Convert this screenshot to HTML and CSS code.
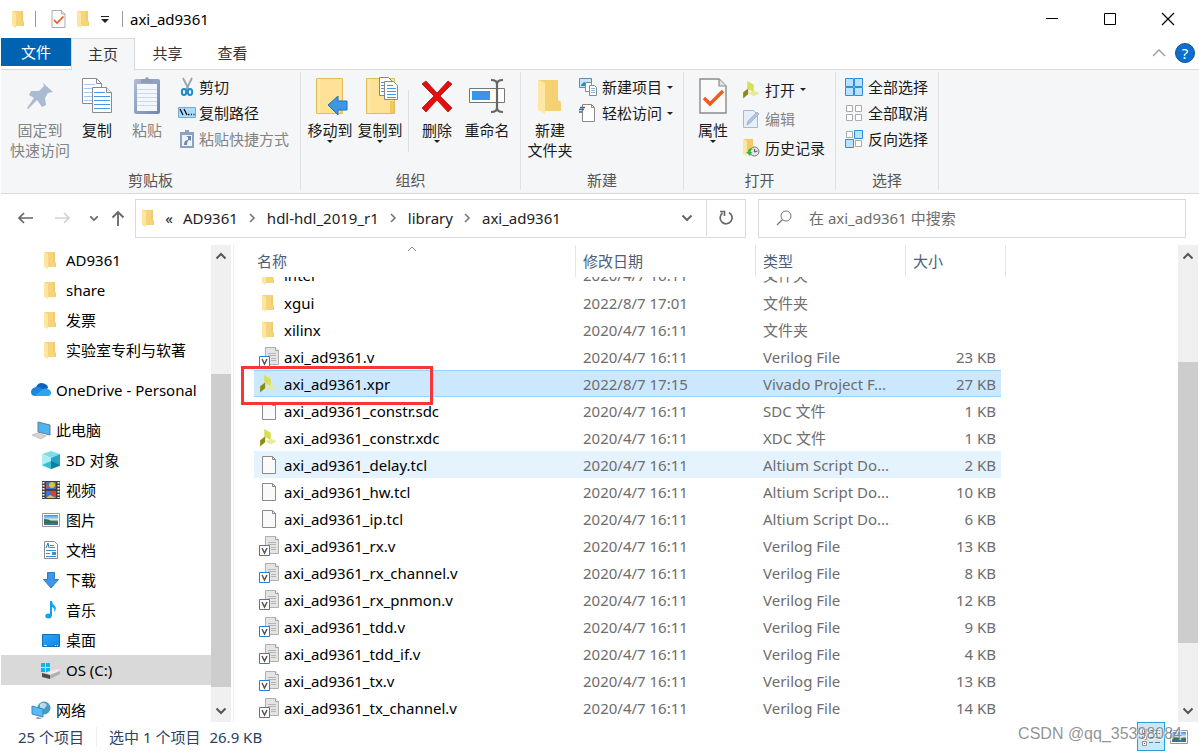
FILE: index.html
```html
<!DOCTYPE html>
<html lang="zh-CN">
<head>
<meta charset="utf-8">
<title>axi_ad9361</title>
<link rel="stylesheet" href="styles.css">
</head>
<body>
<svg class="defs" aria-hidden="true">
  <defs>
    <linearGradient id="clip" x1="0" x2="1" y1="0" y2="1"><stop offset="0" stop-color="#b0bcd2"/><stop offset="1" stop-color="#7185ad"/></linearGradient>
    <linearGradient id="blue" x1="0" x2="1" y1="0" y2="1"><stop offset="0" stop-color="#28a8ff"/><stop offset="1" stop-color="#1583e0"/></linearGradient>
    <linearGradient id="sky" x1="0" x2="0" y1="0" y2="1"><stop offset="0" stop-color="#3f8fe0"/><stop offset="0.5" stop-color="#dff1fb"/><stop offset="0.6" stop-color="#4c7a6c"/><stop offset="1" stop-color="#2f70a8"/></linearGradient>
  </defs>
  <symbol id="folder" viewBox="0 0 14 18">
    <path d="M2 1h10v10l1 1v4H2z" fill="#f3cb68"/><path d="M3 1h7v9l2 2v4H3z" fill="#f6d47b"/><path d="M1 1l4 2v15l-4-2z" fill="#ffe69e"/>
  </symbol>
  <symbol id="checkdoc" viewBox="0 0 28 36">
    <path d="M1 1h19l7 7v27H1z" fill="#fafafa" stroke="#8b8b8b" stroke-width="1.4"/><path d="M20 1v7h7" fill="#e2e2e2" stroke="#8b8b8b" stroke-width="1.2"/><path d="M5 20l6 6L24 13" fill="none" stroke="#f05a1a" stroke-width="3.4"/>
  </symbol>
  <symbol id="vivado" viewBox="0 0 18 19">
    <path d="M5 0l7 4v8l-7-4z" fill="#d8df55"/><path d="M.7 12L6 8v6L.7 18.500z" fill="#8c8c12"/><path d="M6 13l6-3 6 3-6 3z" fill="#e6eb9c"/>
  </symbol>
  <symbol id="page" viewBox="0 0 18 20">
    <path d="M2.500 1.500h10l3 3v14h-13z" fill="#fafafa" stroke="#8b8b8b"/><path d="M12.500 1.500v3h3" fill="none" stroke="#8b8b8b"/>
  </symbol>
  <symbol id="verilog" viewBox="0 0 20 20">
    <path d="M6.500.500h10l3 3V17.500h-13z" fill="#e4e4e4" stroke="#b0b0b0"/><path d="M16.500.500v3h3" fill="#fff" stroke="#a0a0a0"/><path d="M9 6.500h8M9 8.500h8M12 11.500h5M12 13.500h5" stroke="#b4b4b4"/><path d="M.5 9.500h10v10H.5z" fill="#fff" stroke="#2c7fd0"/><path d="M3 12l2.500 5L8 12" fill="none" stroke="#555" stroke-width="1.500"/>
  </symbol>
  <symbol id="picture" viewBox="0 0 18 14">
    <path d="M.5.500h17v13H.5z" fill="#fff" stroke="#9a9a9a"/><path d="M2 2h14v10H2z" fill="url(#sky)"/><path d="M2 6q5 0 7 2l7 1v1H2z" fill="#3c6b58"/>
  </symbol>
  <symbol id="chevup" viewBox="0 0 12 8"><path d="M1.500 6.500L6 2l4.500 4.500" fill="none" stroke="currentColor" stroke-width="2"/></symbol>
  <symbol id="chevdown" viewBox="0 0 12 8"><path d="M1.500 1.500L6 6l4.500-4.500" fill="none" stroke="currentColor" stroke-width="2"/></symbol>
  <symbol id="chevright" viewBox="0 0 8 12"><path d="M2 2l4 4-4 4" fill="none" stroke="#777" stroke-width="1.600"/></symbol>
</svg>

<div class="window">
  <header class="titlebar">
    <svg class="ic-folder"><use href="#folder"/></svg>
    <span class="bar"></span>
    <button class="quick" aria-label="属性"><svg class="ic-check"><use href="#checkdoc"/></svg></button>
    <button class="quick" aria-label="新建文件夹"><svg class="ic-folder"><use href="#folder"/></svg></button>
    <button class="quick custom" aria-label="自定义快速访问工具栏"><svg width="8" height="7"><path d="M0 .5h8" stroke="#222"/><path d="M0 3h8L4 7z" fill="#222"/></svg></button>
    <span class="bar"></span>
    <h1>axi_ad9361</h1>
    <div class="controls">
      <button aria-label="最小化"><svg width="12" height="12"><path d="M0 5.500h12" stroke="#000"/></svg></button>
      <button aria-label="最大化"><svg width="12" height="12"><path d="M.5.500h11v11H.5z" fill="none" stroke="#000"/></svg></button>
      <button aria-label="关闭"><svg width="12" height="12"><path d="M0 0l12 12M12 0L0 12" stroke="#000" stroke-width="1.200"/></svg></button>
    </div>
  </header>

  <nav class="tabs">
    <button class="tab file">文件</button>
    <button class="tab active">主页</button>
    <button class="tab">共享</button>
    <button class="tab">查看</button>
    <div class="tab-tools">
      <button aria-label="最小化功能区"><svg width="14" height="8"><path d="M1 7l6-6 6 6" fill="none" stroke="#9a9a9a" stroke-width="1.300"/></svg></button>
      <button aria-label="帮助" class="help">?</button>
    </div>
  </nav>

  <section class="ribbon">
    <div class="group clipboard">
      <div class="tools">
        <button class="big wide off"><svg viewBox="0 0 30 40"><path d="M18 6l10 9-5 1-3 5 1 7-4 2-5-7-9 9-1-1 7-10-5-3 2-4 8 0 5-5z" fill="#a9bad1"/></svg><span>固定到<br>快速访问</span></button>
        <button class="big slim"><svg viewBox="0 0 30 40"><path d="M.5 1.500h14l5 5v20H.5z" fill="#fff" stroke="#8b8b8b"/><path d="M14.500 1.500v5h5" fill="none" stroke="#8b8b8b"/><path d="M2 7.500h11M2 11.500h11M2 15.500h9M2 19.500h9M2 23.500h9" stroke="#a8c6ee"/><path d="M10.500 10.500h14l5 5v20h-19z" fill="#fff" stroke="#8b8b8b"/><path d="M24.500 10.500v5h5" fill="#eee" stroke="#8b8b8b"/><path d="M12 15.500h11M12 19.500h16M12 23.500h16M12 27.500h16M12 31.500h16" stroke="#4c93ec"/></svg><span>复制</span></button>
        <button class="big slim paste off"><svg viewBox="0 0 30 40"><rect x="2" y="2" width="26" height="35" rx="2" fill="url(#clip)"/><path d="M5 7h20v27H5z" fill="#f3f6fa"/><path d="M5 12.500h20M5 16.500h20M5 20.500h20M5 24.500h20M5 28.500h20" stroke="#cbd9ea"/><path d="M9 2h4q2-4 4 0h4v4H9z" fill="#8e9db9"/></svg><span>粘贴</span></button>
        <div class="stack">
          <button><svg viewBox="0 0 18 18"><path d="M5 0l6 12M14 0L8 12" stroke="#9aa0a8" stroke-width="1.800"/><g fill="none" stroke="#1b8ccc" stroke-width="2"><ellipse cx="6" cy="14" rx="2.200" ry="3"/><ellipse cx="12" cy="14" rx="2.200" ry="3"/></g></svg>剪切</button>
          <button><svg viewBox="0 0 18 18"><path d="M.5 3.500h17v10H.5z" fill="#a8dcfa" stroke="#79a9cb"/><path d="M2 5l3 6M6 5l3 6M10 10.500h1.500M13 10.500h1M15.500 10.500h1" stroke="#111" stroke-width="1.300"/></svg>复制路径</button>
          <button class="off"><svg viewBox="0 0 18 18"><path d="M2 2h14v16H2z" fill="#8fa1c0"/><path d="M4 5h10v11H4z" fill="#eef3fa"/><path d="M7 0h4v4H7z" fill="#8fa1c0"/><path d="M6 15q0-5 4-5V7l-2-1h5v5l-1-1q-3 0-3 5z" fill="#6e85ae"/></svg>粘贴快捷方式</button>
        </div>
      </div>
      <p>剪贴板</p>
    </div>

    <div class="group">
      <div class="tools organize">
        <button class="big"><svg viewBox="0 0 34 40"><path d="M3.500 1.500h26v35h-26z" fill="#ffe197" stroke="#e4bc55"/><path d="M6 2v34" stroke="#fff2c8"/><path d="M27 23h3v13h-3z" fill="#f1c75e"/><path d="M15 28l10-9v5h9v9h-9v5z" fill="#3d97e5" stroke="#1c73c2"/></svg><span>移动到</span><i class="arrow"></i></button>
        <button class="big"><svg viewBox="0 0 34 40"><path d="M3.500 1.500h28v35h-28z" fill="#ffe197" stroke="#e4bc55"/><path d="M6 2v34" stroke="#fff2c8"/><path d="M27 24h4v12h-4z" fill="#f1c75e"/><path d="M16.500.500h9l4 4v14h-13z" fill="#fff" stroke="#888"/><path d="M21.500 4.500h9l4 4v14h-13z" fill="#fff" stroke="#888"/><path d="M18 5.500h3M18 8.500h3M18 11.500h3M18 14.500h3M24 8.500h6M24 11.500h9M24 14.500h9M24 17.500h9M24 20.500h9" stroke="#4c93ec"/></svg><span>复制到</span><i class="arrow"></i></button>
        <span class="divider"></span>
        <button class="big"><svg viewBox="0 0 34 40"><path d="M2 7l4-3 11 12L28 4l4 3-12 12 12 12-4 4-11-12L6 35l-4-4 12-12z" fill="#e80d0d" stroke="#9c0606" stroke-width=".7"/></svg><span>删除</span><i class="arrow"></i></button>
        <button class="big"><svg viewBox="0 0 36 40"><path d="M.5 11.500h35v14H.5z" fill="#fff" stroke="#777"/><path d="M3 14h18v9H3z" fill="#3796e9"/><path d="M22 3q6 0 6 4v24q0 4-6 4M34 3q-6 0-6 4v24q0 4 6 4" fill="none" stroke="#666" stroke-width="2.200"/></svg><span>重命名</span></button>
      </div>
      <p>组织</p>
    </div>

    <div class="group">
      <div class="tools">
        <button class="big"><svg viewBox="0 0 34 40"><path d="M6 3h19v20l3 2v9H6z" fill="#f6d171"/><path d="M5 3l7 3v31l-7-4z" fill="#ffe8a6"/></svg><span>新建<br>文件夹</span></button>
        <div class="stack">
          <button><svg viewBox="0 0 18 18"><path d="M.5.500h12v9H.5z" fill="#c5e5fb" stroke="#5f8fb3"/><path d="M2 7l3-3 3 2 3-2v4H2z" fill="#2f84c6"/><path d="M6.500 4.500h6v9h-6z" fill="#fff" stroke="#888"/><path d="M10.500 7.500h5l2 2v8h-7z" fill="#fff" stroke="#888"/><path d="M12 10.500h4M12 12.500h4M12 14.500h4" stroke="#8bb2de"/></svg>新建项目<i class="arrow"></i></button>
          <button><svg viewBox="0 0 18 18"><path d="M3.500.500h9l3 3v14h-12z" fill="#fff" stroke="#888"/><path d="M12.500.500v3h3" fill="none" stroke="#888"/><path d="M1 3.500h5M0 5.500h5M0 8h3" stroke="#2573b9" stroke-width="1.400"/></svg>轻松访问<i class="arrow"></i></button>
        </div>
      </div>
      <p>新建</p>
    </div>

    <div class="group">
      <div class="tools">
        <button class="big"><svg viewBox="0 0 30 40"><use href="#checkdoc" x="1" y="1" width="28" height="36"/></svg><span>属性</span><i class="arrow"></i></button>
        <div class="stack tall">
          <button><svg><use href="#vivado"/></svg>打开<i class="arrow"></i></button>
          <button class="off"><svg viewBox="0 0 18 18"><path d="M1.500.500h10l4 4v13h-14z" fill="#e6eefa" stroke="#a8b8d2"/><path d="M5 15l1-4 9-9 2 2-9 9z" fill="#b0c3df" stroke="#8ca3c4" stroke-width=".6"/></svg>编辑</button>
          <button><svg viewBox="0 0 18 18"><path d="M2 0h9v14H2z" fill="#f3cb68"/><path d="M1 0l4 2v15l-4-2z" fill="#ffe69e"/><circle cx="12.500" cy="12.500" r="4.500" fill="#e5e5e5" stroke="#777"/><path d="M12.500 10v3l3-1" fill="none" stroke="#555"/><path d="M4 13l4 4 2-4H8q1-3 3-3-5-2-5 3z" fill="#32b24a"/></svg>历史记录</button>
        </div>
      </div>
      <p>打开</p>
    </div>

    <div class="group">
      <div class="tools">
        <div class="stack first">
          <button><svg viewBox="0 0 18 18"><path d="M.5.500h8v8h-8zM9.500.500h8v8h-8zM.5 9.500h8v8h-8zM9.500 9.500h8v8h-8z" fill="#b9e2ff" stroke="#2e8ee0"/></svg>全部选择</button>
          <button><svg viewBox="0 0 18 18"><path d="M1.500 1.500h6v6h-6zM10.500 1.500h6v6h-6zM1.500 10.500h6v6h-6zM10.500 10.500h6v6h-6z" fill="#fff" stroke="#aaa"/></svg>全部取消</button>
          <button><svg viewBox="0 0 18 18"><path d="M1.500 1.500h6v6h-6zM10.500 10.500h6v6h-6z" fill="#fff" stroke="#aaa"/><path d="M9.500.500h8v8h-8zM.5 9.500h8v8h-8z" fill="#b9e2ff" stroke="#2e8ee0"/></svg>反向选择</button>
        </div>
      </div>
      <p>选择</p>
    </div>
  </section>

  <div class="address">
    <div class="history">
      <button aria-label="后退"><svg width="16" height="12"><path d="M16 6H2M7 1L2 6l5 5" fill="none" stroke="#666" stroke-width="1.700"/></svg></button>
      <button aria-label="前进" disabled><svg width="16" height="12"><path d="M0 6h14M9 1l5 5-5 5" fill="none" stroke="#d2d2d2" stroke-width="1.700"/></svg></button>
      <button class="narrow" aria-label="最近浏览的位置"><svg width="10" height="7"><use href="#chevdown"/></svg></button>
      <button class="narrow" aria-label="上移"><svg width="14" height="16"><path d="M7 16V2M1.500 7.500L7 2l5.500 5.500" fill="none" stroke="#666" stroke-width="1.800"/></svg></button>
    </div>
    <div class="pathbox">
      <svg class="ic-folder"><use href="#folder"/></svg>
      <span class="more">«</span>
      <a href="#">AD9361</a><svg class="sep"><use href="#chevright"/></svg>
      <a href="#">hdl-hdl_2019_r1</a><svg class="sep"><use href="#chevright"/></svg>
      <a href="#">library</a><svg class="sep"><use href="#chevright"/></svg>
      <a href="#">axi_ad9361</a>
      <button class="drop" aria-label="以前的位置"><svg width="12" height="8"><use href="#chevdown"/></svg></button>
      <button class="refresh" aria-label="刷新"><svg width="16" height="16"><path d="M11 2.500A6 6 0 1 1 4.500 3M2 1.500h4.500V6" fill="none" stroke="#666" stroke-width="1.700"/></svg></button>
    </div>
    <label class="search">
      <svg width="16" height="16"><circle cx="10" cy="6" r="5" fill="none" stroke="#777"/><path d="M6.500 9.500L1 15" stroke="#777" stroke-width="1.300"/></svg>
      <input type="text" aria-label="搜索" placeholder="在 axi_ad9361 中搜索">
    </label>
  </div>

  <main class="body">
    <nav class="tree">
      <a href="#"><svg class="ic-folder"><use href="#folder"/></svg>AD9361</a>
      <a href="#"><svg class="ic-folder"><use href="#folder"/></svg>share</a>
      <a href="#"><svg class="ic-folder"><use href="#folder"/></svg>发票</a>
      <a href="#"><svg class="ic-folder"><use href="#folder"/></svg>实验室专利与软著</a>
      <a href="#" class="root"><svg viewBox="0 0 20 18"><path d="M5 6q3-6 9-3 3 1 3 4l-8 5z" fill="#0f62bb"/><path d="M4 15q-4 0-4-4 0-4 5-5 4-1 7 3l-4 6z" fill="#1b86dc"/><path d="M3 15l9-7q3-1 5 0 3 1 3 4 0 3-3 3z" fill="#2ba3ee"/></svg>OneDrive - Personal</a>
      <a href="#" class="root"><svg viewBox="0 0 20 18"><path d="M7 1l12 3v10L7 11z" fill="#4db4f3" stroke="#6d7b88"/><path d="M1 14l5-2 9 3-5 3z" fill="#d3d6d9" stroke="#a8adb2" stroke-width=".6"/></svg>此电脑</a>
      <a href="#"><svg viewBox="0 0 18 18"><path d="M9 0l9 3-9 4-9-4z" fill="#7fdcea"/><path d="M0 3l9 4v11l-9-3z" fill="#aeeef2"/><path d="M18 3L9 7v11l9-3z" fill="#25a4c4"/><path d="M0 14l9-4v8z" fill="#37bfd0"/><path d="M9 10l9 4-9 4z" fill="#157d9c"/></svg>3D 对象</a>
      <a href="#"><svg viewBox="0 0 18 18"><path d="M0 0h18v18H0z" fill="#44413d"/><path d="M1.500 1v16M16.500 1v16" stroke="#fff" stroke-width="2" stroke-dasharray="1.500 1.500"/><path d="M4 1h10v7H4zM4 10h10v7H4z" fill="#3f74d4"/><circle cx="10" cy="4" r="3" fill="#dfc62d"/><path d="M4 3l4 4H4z" fill="#d95238"/><circle cx="11" cy="12" r="2.500" fill="#d8432c"/><path d="M4 17l4-3 6 3z" fill="#e3c33b"/></svg>视频</a>
      <a href="#"><svg viewBox="0 0 18 18"><use href="#picture" y="2" width="18" height="14"/></svg>图片</a>
      <a href="#"><svg viewBox="0 0 18 18"><path d="M2.500.500h10l3 3v14h-13z" fill="#fff" stroke="#8b8b8b"/><path d="M8 4.500h4M8 6.500h5M4 9.500h10M4 12.500h4M4 15.500h10" stroke="#3b8cd5"/><path d="M4 7l2-5 1 5" fill="none" stroke="#2573b9"/><path d="M10 11h4v3h-4z" fill="#4b90b1"/></svg>文档</a>
      <a href="#"><svg viewBox="0 0 18 18"><path d="M5.500 1.500h7v7h4L9 17 1.500 8.500h4z" fill="#3d97e5" stroke="#2a7dc8"/></svg>下载</a>
      <a href="#"><svg viewBox="0 0 18 18"><ellipse cx="6.500" cy="15" rx="3.200" ry="2.500" fill="#14a0f0"/><path d="M8 0h2q0 3 3 5 2 3-1 6 1-4-2-5v9H8z" fill="#14a0f0"/></svg>音乐</a>
      <a href="#"><svg viewBox="0 0 18 18"><path d="M.5 3.500h17v12H.5z" fill="url(#blue)" stroke="#0f70b8"/><path d="M2 14.500h3M13 14.500h1M15 14.500h1" stroke="#cfeaff"/></svg>桌面</a>
      <a href="#" class="current"><svg viewBox="0 0 18 18"><path d="M-1 2h4v4h-4zM4 2h4v4H4zM-1 7h4v4h-4zM4 7h4v4H4z" fill="#12b2ee"/><path d="M5 11l10-3 3 2-10 4z" fill="#ececec"/><path d="M0 12l8 2v4l-8-2z" fill="#4a4d50"/><path d="M8 14l10-4v3L8 18z" fill="#aeb0b3"/></svg>OS (C:)</a>
      <a href="#" class="root"><svg viewBox="0 0 20 18"><circle cx="13" cy="7" r="6.500" fill="#4b9ac2"/><path d="M9 3q4-3 7 1l-3 4-4-1z" fill="#b8dbe7"/><path d="M1 5l11 3v8L1 13z" fill="#59baf6" stroke="#3789c4"/><path d="M6 16l5 1-2 1H5z" fill="#999"/></svg>网络</a>
    </nav>
    <div class="scroll tree-scroll"><svg><use href="#chevup"/></svg><span class="before"></span><span class="thumb"></span><span class="after"></span><svg><use href="#chevdown"/></svg></div>

    <section class="files">
      <svg class="sorted" viewBox="0 0 10 6"><path d="M1 5l4-4 4 4" fill="none" stroke="#888"/></svg>
      <table>
        <colgroup><col class="c-name"><col class="c-date"><col class="c-type"><col class="c-size"></colgroup>
        <thead><tr><th>名称</th><th>修改日期</th><th>类型</th><th>大小</th></tr></thead>
        <tbody>
          <tr class="cut"><td><div><svg><use href="#folder"/></svg>inter</div></td><td><div>2020/4/7 16:11</div></td><td><div>文件夹</div></td><td></td></tr>
          <tr><td><div><svg class="f"><use href="#folder"/></svg>xgui</div></td><td>2022/8/7 17:01</td><td>文件夹</td><td></td></tr>
          <tr><td><div><svg class="f"><use href="#folder"/></svg>xilinx</div></td><td>2020/4/7 16:11</td><td>文件夹</td><td></td></tr>
          <tr><td><div><svg><use href="#verilog"/></svg>axi_ad9361.v</div></td><td>2020/4/7 16:11</td><td>Verilog File</td><td>23 KB</td></tr>
          <tr class="selected"><td><span class="mark"></span><div><svg class="v"><use href="#vivado"/></svg>axi_ad9361.xpr</div></td><td>2022/8/7 17:15</td><td>Vivado Project F...</td><td>27 KB</td></tr>
          <tr><td><div><svg><use href="#page"/></svg>axi_ad9361_constr.sdc</div></td><td>2020/4/7 16:11</td><td>SDC 文件</td><td>1 KB</td></tr>
          <tr><td><div><svg class="v"><use href="#vivado"/></svg>axi_ad9361_constr.xdc</div></td><td>2020/4/7 16:11</td><td>XDC 文件</td><td>1 KB</td></tr>
          <tr class="hover"><td><div><svg><use href="#page"/></svg>axi_ad9361_delay.tcl</div></td><td>2020/4/7 16:11</td><td>Altium Script Do...</td><td>2 KB</td></tr>
          <tr><td><div><svg><use href="#page"/></svg>axi_ad9361_hw.tcl</div></td><td>2020/4/7 16:11</td><td>Altium Script Do...</td><td>10 KB</td></tr>
          <tr><td><div><svg><use href="#page"/></svg>axi_ad9361_ip.tcl</div></td><td>2020/4/7 16:11</td><td>Altium Script Do...</td><td>6 KB</td></tr>
          <tr><td><div><svg><use href="#verilog"/></svg>axi_ad9361_rx.v</div></td><td>2020/4/7 16:11</td><td>Verilog File</td><td>13 KB</td></tr>
          <tr><td><div><svg><use href="#verilog"/></svg>axi_ad9361_rx_channel.v</div></td><td>2020/4/7 16:11</td><td>Verilog File</td><td>8 KB</td></tr>
          <tr><td><div><svg><use href="#verilog"/></svg>axi_ad9361_rx_pnmon.v</div></td><td>2020/4/7 16:11</td><td>Verilog File</td><td>12 KB</td></tr>
          <tr><td><div><svg><use href="#verilog"/></svg>axi_ad9361_tdd.v</div></td><td>2020/4/7 16:11</td><td>Verilog File</td><td>9 KB</td></tr>
          <tr><td><div><svg><use href="#verilog"/></svg>axi_ad9361_tdd_if.v</div></td><td>2020/4/7 16:11</td><td>Verilog File</td><td>4 KB</td></tr>
          <tr><td><div><svg><use href="#verilog"/></svg>axi_ad9361_tx.v</div></td><td>2020/4/7 16:11</td><td>Verilog File</td><td>13 KB</td></tr>
          <tr><td><div><svg><use href="#verilog"/></svg>axi_ad9361_tx_channel.v</div></td><td>2020/4/7 16:11</td><td>Verilog File</td><td>14 KB</td></tr>
        </tbody>
      </table>
    </section>
    <div class="scroll file-scroll"><svg><use href="#chevup"/></svg><span class="before"></span><span class="thumb"></span><span class="after"></span><svg><use href="#chevdown"/></svg></div>
  </main>

  <footer class="status">
    <span>25 个项目</span><span class="chosen">选中 1 个项目</span><span>26.9 KB</span>
    <div class="views">
      <button class="on" aria-label="详细信息"><svg width="18" height="18"><path d="M.5 1.500h4v4h-4zM.5 7.500h4v4h-4zM.5 13.500h4v4h-4z" fill="#fff" stroke="#9a8f8f"/><path d="M2 3h1v1H2zM2 9h1v1H2zM2 15h1v1H2z" fill="#c33"/><path d="M7 2.500h4M13 2.500h5M7 5.500h4M13 5.500h5M7 9.500h4M13 9.500h5M7 14.500h4M13 14.500h5" stroke="#777"/></svg></button>
      <button aria-label="大图标"><svg width="18" height="14"><use href="#picture"/></svg></button>
    </div>
    <span class="watermark">CSDN @qq_35398084</span>
  </footer>
</div>
</body>
</html>
```
FILE: styles.css
```css
* { box-sizing: border-box; }
body {
  margin: 0;
  background: #fff;
  color: #1a1a1a;
  font: 15px/20px "Noto Sans", "Noto Sans CJK SC", sans-serif;
}
button {
  border: 0;
  margin: 0;
  padding: 0;
  background: none;
  color: inherit;
  font: inherit;
}
a { color: inherit; text-decoration: none; }
svg { display: block; flex: none; overflow: visible; }
.defs { position: absolute; width: 0; height: 0; }
.ic-folder { width: 14px; height: 18px; }
.window {
  display: flex;
  flex-direction: column;
  height: 100vh;
  padding-left: 1px;
}

/* title bar */
.titlebar {
  display: flex;
  align-items: center;
  height: 38px;
  padding: 0 2px 0 10px;
}
.bar { width: 1px; height: 16px; margin: 0 15px 0 10px; background: #999; }
.ic-check { width: 15px; height: 18px; }
.quick { margin-right: 10px; }
.custom { margin: 0 0 0 1px; }
.custom + .bar { margin: 0 7px 0 13px; }
h1 { margin: 0; font-size: 15px; font-weight: 400; color: #000; }
.controls { display: flex; align-self: stretch; margin-left: auto; }
.controls button { display: grid; place-items: center; width: 58px; }

/* tabs */
.tabs { display: flex; height: 32px; border-bottom: 1px solid #d9dadb; }
.tab { width: 65px; height: 31px; padding-bottom: 2px; color: #333; }
.tab.file { width: 70px; height: 28px; padding: 0; background: #0063b1; color: #fff; }
.tab.active {
  width: 64px;
  height: 32px;
  border: 1px solid #d9dadb;
  border-bottom: 0;
  background: #f5f6f7;
}
.tab-tools { display: flex; align-items: center; gap: 9px; margin-left: auto; padding: 0 4px 2px 0; }
.help {
  width: 20px;
  height: 20px;
  border: 1px solid #164f8c;
  border-radius: 50%;
  background: #0b6fd0;
  color: #fff;
  line-height: 18px;
}

/* ribbon */
.ribbon {
  display: flex;
  height: 124px;
  padding: 2px 0 3px;
  border-bottom: 1px solid #d9dadb;
  background: #f5f6f7;
}
.group {
  display: flex;
  flex-direction: column;
  justify-content: space-between;
  border-right: 1px solid #e0e1e3;
}
.group p { margin: 0; color: #555; text-align: center; }
.tools { display: flex; padding: 0 10px 0 4px; }
.clipboard .tools { padding: 0 11px 0 2px; }
.tools.organize { padding: 0 8px 0 4px; }
.big {
  display: flex;
  flex-direction: column;
  align-items: center;
  width: 50px;
  padding-top: 5px;
  white-space: nowrap;
}
.big svg { width: 36px; height: 40px; margin-bottom: 3px; }
.big.wide { width: 74px; }
.big.slim { width: 40px; }
.paste { margin: 0 10px; }
.off { color: #838383; }
.arrow {
  width: 0;
  border: 3px solid transparent;
  border-top: 3px solid #222;
  border-bottom: 0;
}
.divider { width: 1px; height: 80px; margin: 0 3px; padding: 0; background: linear-gradient(transparent 18px, #dedfe1 18px); }
.stack { padding: 2px 0 0 4px; }
.stack button { display: flex; align-items: center; height: 26px; white-space: nowrap; }
.stack svg { width: 18px; height: 18px; margin-right: 5px; }
.clipboard .stack { padding-left: 1px; }
.clipboard .stack svg { margin-right: 3px; }
.stack .arrow { margin-left: 5px; }
.stack.first { margin-left: 1px; }
.stack.tall { padding-top: 3px; }
.stack.tall button { height: 29px; }

/* address bar */
.address { display: flex; align-items: center; height: 51px; padding: 0 13px 3px 0; }
.history { display: flex; width: 134px; padding-left: 5px; color: #666; }
.history button { display: grid; place-items: center; width: 38px; height: 24px; }
.history .narrow { width: 24px; }
.pathbox {
  display: flex;
  flex: 604 1 0;
  align-items: center;
  height: 39px;
  border: 1px solid #d9d9d9;
  padding: 0 0 1px 5px;
  color: #222;
}
.more { width: 28px; text-align: center; }
.sep { width: 8px; height: 12px; margin: 0 11px 0 10px; }
.drop, .refresh { display: grid; place-items: center; width: 39px; height: 36px; color: #666; }
.drop { margin-left: auto; }
.refresh { border-left: 1px solid #d9d9d9; }
.search {
  display: flex;
  flex: 409 1 0;
  align-items: center;
  gap: 17px;
  height: 39px;
  margin-left: 12px;
  padding: 0 0 1px 17px;
  border: 1px solid #d9d9d9;
}
.search input { flex: 1; min-width: 0; border: 0; padding: 0; outline: 0; background: none; font: inherit; }
.search input::placeholder { color: #6d6d6d; opacity: 1; }

/* body */
.body { display: flex; flex: 1; min-height: 0; }
.tree { width: 210px; overflow: hidden; color: #000; }
.tree a { display: flex; align-items: center; height: 30px; padding-left: 41px; white-space: nowrap; }
.tree a svg { width: 18px; height: 18px; margin-right: 6px; }
.tree .ic-folder { width: 14px; margin: 0 9px 0 1px; }
.tree a.root { margin-top: 10px; padding-left: 30px; }
.tree .root svg { width: 20px; margin-right: 5px; }
.tree .current { background: #d9d9d9; }
.scroll {
  display: flex;
  flex: none;
  flex-direction: column;
  align-items: center;
  width: 20px;
  padding: 7px 0;
  background: #f0f0f0;
  color: #555;
}
.scroll svg { width: 12px; height: 8px; }
.thumb { width: 20px; background: #cdcdcd; }
.tree-scroll .before { flex: 114; }
.tree-scroll .thumb { flex: 313; }
.tree-scroll .after { flex: 20; }
.file-scroll { margin-right: 1px; }
.file-scroll .before { flex: 102; }
.file-scroll .thumb { flex: 281; }
.file-scroll .after { flex: 64; }

/* file list */
.files {
  position: relative;
  flex: 1;
  min-width: 0;
  margin-left: 2px;
  padding-left: 20px;
  border-left: 1px solid #eee;
}
.sorted { position: absolute; top: 1px; left: 173px; width: 10px; height: 6px; }
table { width: 752px; border-spacing: 0; table-layout: fixed; color: #6d6d6d; }
.c-name { width: 322px; }
.c-date { width: 180px; }
.c-type { width: 150px; }
.c-size { width: 100px; }
th {
  height: 32px;
  padding: 0 0 0 7px;
  border-right: 1px solid #e5e5e5;
  color: #4c607a;
  font-weight: 400;
  text-align: left;
}
th:first-child { padding-left: 3px; }
td { height: 27px; padding: 0 0 0 7px; white-space: nowrap; }
td:first-child { position: relative; padding-left: 5px; color: #000; }
td:last-child { padding-right: 5px; border-right: 5px solid transparent; background-clip: padding-box; text-align: right; }
td div { display: flex; align-items: center; }
td svg { width: 20px; height: 20px; margin-right: 5px; }
td svg.v, td svg.f { width: 18px; height: 18px; margin-right: 7px; }
.cut td { height: 12px; }
.cut td div { align-items: flex-end; height: 12px; overflow: hidden; line-height: 27px; }
.cut svg { width: 18px; height: 18px; margin: 0 7px 4px 0; }
.hover td { background-color: #e5f3ff; }
.selected td { background-color: #cce8ff; box-shadow: inset 0 1px #99d1ff, inset 0 -1px #99d1ff; }
.mark {
  position: absolute;
  z-index: 1;
  top: -4px;
  left: -13px;
  width: 192px;
  height: 39px;
  border: 3px solid #f93535;
}

/* status bar */
.status {
  position: relative;
  display: flex;
  align-items: center;
  height: 30px;
  padding: 0 8px 1px 17px;
  color: #2b4262;
}
.chosen { margin: 0 9px 0 12px; padding-left: 12px; border-left: 1px solid #eee; }
.views { display: flex; align-items: center; gap: 5px; margin-left: auto; padding-right: 3px; }
.views .on { display: grid; place-items: center; width: 28px; height: 29px; border: 1px solid #26a0da; background: #cbe8f6; }
.watermark {
  position: absolute;
  right: 17px;
  top: 2px;
  color: rgba(110, 110, 110, 0.75);
  font: 16px/20px "Liberation Sans", sans-serif;
  text-shadow: 1px 1px 1px #fff;
}
```
